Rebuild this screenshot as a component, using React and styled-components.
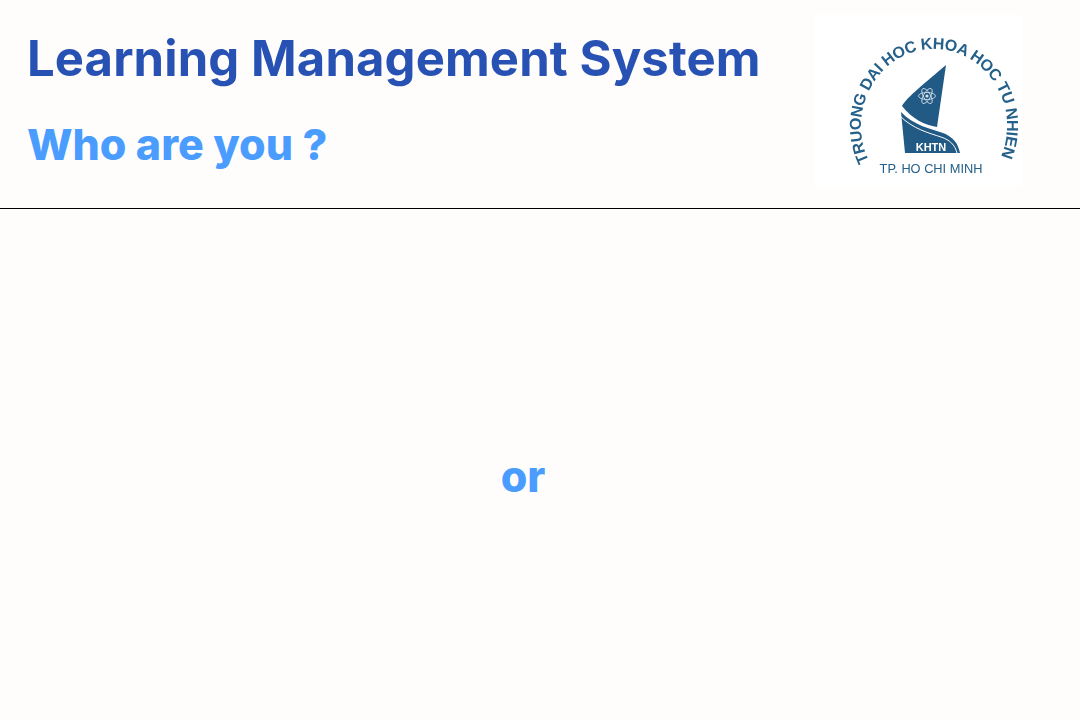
import React from 'react';
import styled, { createGlobalStyle } from 'styled-components';

const GlobalStyle = createGlobalStyle`
  html, body {
    margin: 0;
    padding: 0;
    background: #fffdfb;
  }
`;

const Page = styled.div`
  width: 1080px;
  height: 720px;
  overflow: hidden;
  display: flex;
  flex-direction: column;
  background: #fffdfb;
  font-family: Inter, "Liberation Sans", sans-serif;
  font-weight: 700;
`;

const Header = styled.header`
  box-sizing: border-box;
  height: 209px;
  flex: none;
  display: flex;
  justify-content: space-between;
  border-bottom: 1px solid #000;
  padding: 15px 58px 0 27px;
`;

const TitleBlock = styled.div`
  display: flex;
  flex-direction: column;
  gap: 31px;
  padding-top: 15px;
`;

const Title = styled.h1`
  margin: 0;
  font-size: 49px;
  line-height: 58px;
  font-weight: 700;
  letter-spacing: 0.12px;
  color: #2752b3;
`;

const Subtitle = styled.h2`
  margin: 0;
  font-size: 43px;
  line-height: 51px;
  font-weight: 800;
  color: #4a9dff;
`;

const Main = styled.main`
  flex: 1;
  display: flex;
  justify-content: center;
  align-items: flex-start;
  padding: 242px 34px 0 0;
`;

const Or = styled.span`
  font-size: 43px;
  line-height: 51px;
  font-weight: 800;
  color: #4a9dff;
`;

const LogoBox = styled.svg`
  display: block;
  width: 207px;
  height: 172px;
  background: #ffffff;
  filter: blur(0.3px);
`;

const LogoText = styled.text`
  font-family: "Liberation Sans", Arial, sans-serif;
  font-weight: ${(p) => p.$weight || 400};
  fill: ${(p) => p.$fill || '#25608a'};
`;

function Logo() {
  return (
    <LogoBox viewBox="0 0 207 172">
      <defs>
        <path id="arc" d="M 54 146 A 73 77 0 1 1 184 146" fill="none" />
      </defs>
      <LogoText $weight={700} fontSize="16">
        <textPath href="#arc" textLength="303" lengthAdjust="spacing">TRUONG DAI HOC KHOA HOC TU NHIEN</textPath>
      </LogoText>

      {/* sail */}
      <path d="M131 50 L122 112 C110 110 97 104 87 91 C92 82 110 68 131 50 Z" fill="#215a85" />
      {/* hull */}
      <path d="M86 97 C98 110 116 114 128 118 C138 122 143 128 145 138 L90 138 Z" fill="#215a85" />
      <path d="M85 101 C98 114 114 118 126 122 C135 125 140 130 142 138" fill="none" stroke="#fff" strokeWidth="1" />

      {/* atom */}
      <g fill="none" stroke="#d9e4ec" strokeWidth="0.8">
        <ellipse cx="112" cy="81" rx="8.5" ry="3.5" />
        <ellipse cx="112" cy="81" rx="8.5" ry="3.5" transform="rotate(60 112 81)" />
        <ellipse cx="112" cy="81" rx="8.5" ry="3.5" transform="rotate(-60 112 81)" />
      </g>
      <circle cx="112" cy="81" r="1.6" fill="#d9e4ec" />

      <LogoText $fill="#fff" $weight={700} x="116" y="136" fontSize="11" textAnchor="middle">KHTN</LogoText>
      <LogoText x="116" y="158" fontSize="12.8" textAnchor="middle">TP. HO CHI MINH</LogoText>
    </LogoBox>
  );
}

export default function App() {
  return (
    <Page>
      <GlobalStyle />
      <Header>
        <TitleBlock>
          <Title>Learning Management System</Title>
          <Subtitle>Who are you ?</Subtitle>
        </TitleBlock>
        <Logo />
      </Header>
      <Main>
        <Or>or</Or>
      </Main>
    </Page>
  );
}
